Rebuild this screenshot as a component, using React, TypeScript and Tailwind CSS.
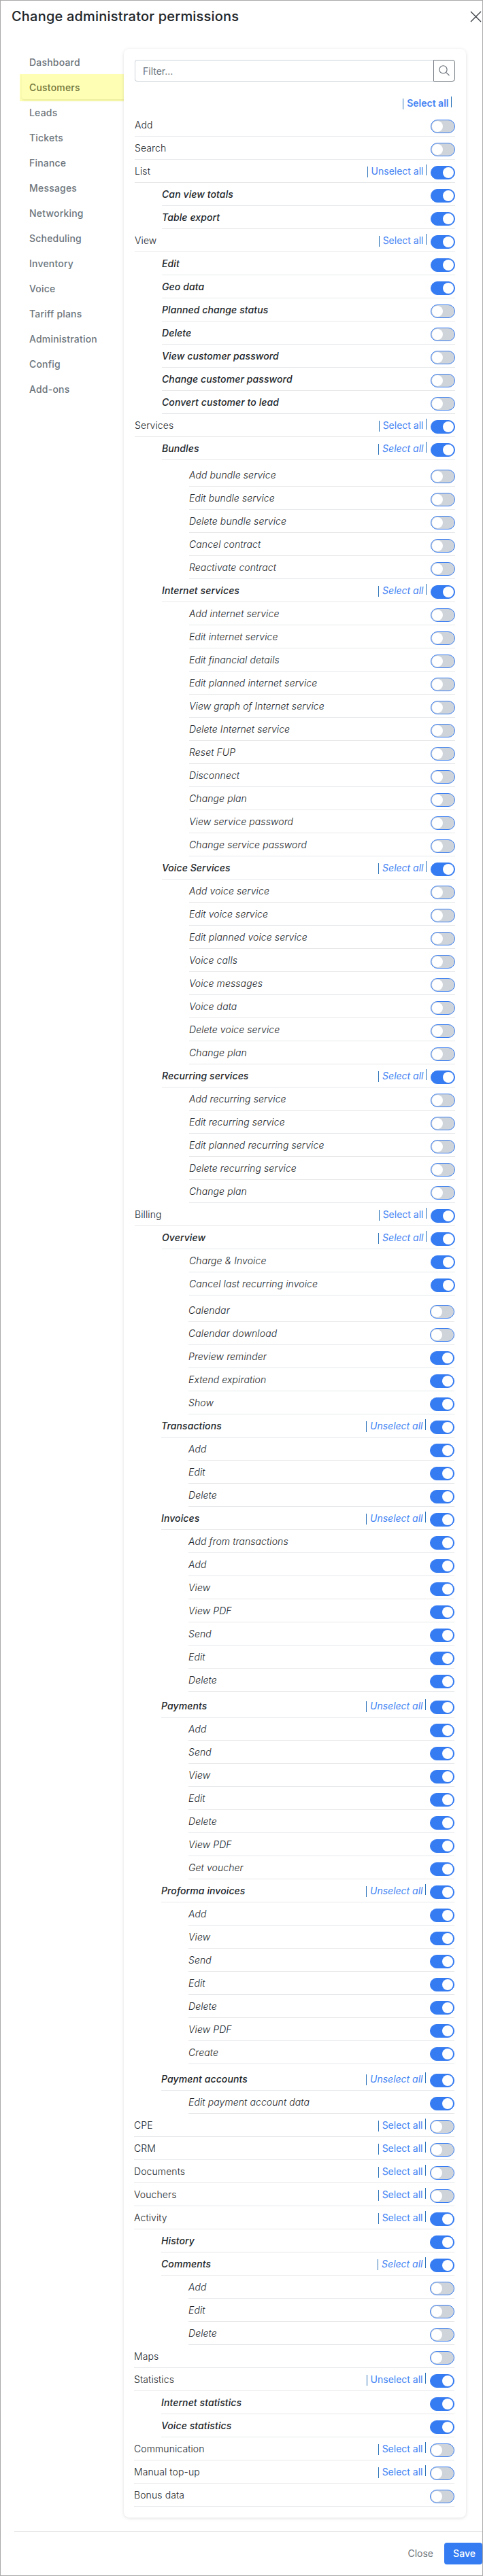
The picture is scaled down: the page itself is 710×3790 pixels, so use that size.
type Row = { t: string; d: 0 | 1 | 2; on?: boolean; a?: 's' | 'u'; gap?: string };

const r = (t: string, d: 0 | 1 | 2, on = false, a?: 's' | 'u', gap?: string): Row => ({ t, d, on, a, gap });

const upper: Row[] = [
  r('Add', 0), r('Search', 0), r('List', 0, true, 'u'), r('Can view totals', 1, true), r('Table export', 1, true),
  r('View', 0, true, 's'), r('Edit', 1, true), r('Geo data', 1, true), r('Planned change status', 1), r('Delete', 1),
  r('View customer password', 1), r('Change customer password', 1), r('Convert customer to lead', 1),
  r('Services', 0, true, 's'), r('Bundles', 1, true, 's'),
  r('Add bundle service', 2, false, undefined, 'mt-[5px]'), r('Edit bundle service', 2), r('Delete bundle service', 2), r('Cancel contract', 2), r('Reactivate contract', 2),
  r('Internet services', 1, true, 's'), r('Add internet service', 2), r('Edit internet service', 2), r('Edit financial details', 2),
  r('Edit planned internet service', 2), r('View graph of Internet service', 2), r('Delete Internet service', 2), r('Reset FUP', 2),
  r('Disconnect', 2), r('Change plan', 2), r('View service password', 2), r('Change service password', 2),
  r('Voice Services', 1, true, 's'), r('Add voice service', 2), r('Edit voice service', 2), r('Edit planned voice service', 2),
  r('Voice calls', 2), r('Voice messages', 2), r('Voice data', 2), r('Delete voice service', 2), r('Change plan', 2),
  r('Recurring services', 1, true, 's'), r('Add recurring service', 2), r('Edit recurring service', 2),
  r('Edit planned recurring service', 2), r('Delete recurring service', 2), r('Change plan', 2),
  r('Billing', 0, true, 's'), r('Overview', 1, true, 's'), r('Charge & Invoice', 2, true), r('Cancel last recurring invoice', 2, true),
];

const lower: Row[] = [
  r('Calendar', 2, false, undefined, 'mt-[5px]'), r('Calendar download', 2), r('Preview reminder', 2, true), r('Extend expiration', 2, true), r('Show', 2, true),
  r('Transactions', 1, true, 'u'), r('Add', 2, true), r('Edit', 2, true), r('Delete', 2, true),
  r('Invoices', 1, true, 'u'), r('Add from transactions', 2, true), r('Add', 2, true), r('View', 2, true), r('View PDF', 2, true), r('Send', 2, true), r('Edit', 2, true), r('Delete', 2, true),
  r('Payments', 1, true, 'u', 'mt-1'), r('Add', 2, true), r('Send', 2, true), r('View', 2, true), r('Edit', 2, true), r('Delete', 2, true), r('View PDF', 2, true), r('Get voucher', 2, true),
  r('Proforma invoices', 1, true, 'u'), r('Add', 2, true), r('View', 2, true), r('Send', 2, true), r('Edit', 2, true), r('Delete', 2, true), r('View PDF', 2, true), r('Create', 2, true),
  r('Payment accounts', 1, true, 'u', 'mt-[5px]'), r('Edit payment account data', 2, true),
  r('CPE', 0, false, 's'), r('CRM', 0, false, 's'), r('Documents', 0, false, 's'), r('Vouchers', 0, false, 's'), r('Activity', 0, true, 's'),
  r('History', 1, true), r('Comments', 1, true, 's'), r('Add', 2), r('Edit', 2), r('Delete', 2), r('Maps', 0),
  r('Statistics', 0, true, 'u'), r('Internet statistics', 1, true), r('Voice statistics', 1, true),
  r('Communication', 0, false, 's'), r('Manual top-up', 0, false, 's'), r('Bonus data', 0),
];

const nav = ['Dashboard', 'Customers', 'Leads', 'Tickets', 'Finance', 'Messages', 'Networking', 'Scheduling', 'Inventory', 'Voice', 'Tariff plans', 'Administration', 'Config', 'Add-ons'];

const indent = ['', 'ml-10 italic', 'ml-20 italic'];
const label = ['font-light', 'font-medium', 'font-light'];

function Toggle({ on }: { on?: boolean }) {
  return (
    <span className={`flex h-5 w-9 shrink-0 items-center rounded-full border border-[#357bf2] ${on ? 'justify-end bg-[#357bf2]' : 'bg-[#ced4da]'}`}>
      <span className="mx-[0.6px] size-[16.6px] rounded-full bg-white" />
    </span>
  );
}

function BulkLink({ text }: { text: string }) {
  return (
    <span className="flex h-5 items-start text-[#4383f3]">
      <span className="mt-[3px] h-4 w-px bg-[#2a72b8]" />
      <span className="ml-[5px] leading-5">{text}</span>
      <span className="ml-[3.5px] h-4 w-px bg-[#2a72b8]" />
    </span>
  );
}

function PermissionRow({ row }: { row: Row }) {
  return (
    <div className={`flex h-[34px] items-start border-b border-[#e6e8ea] ${indent[row.d]} ${row.gap ?? ''}`}>
      <span className={`mt-[7px] flex-1 leading-5 tracking-[0.1px] text-[#212529] ${label[row.d]}`}>{row.t}</span>
      {row.a && (
        <span className="mt-[7px] mr-1.5">
          <BulkLink text={row.a === 's' ? 'Select all' : 'Unselect all'} />
        </span>
      )}
      <span className="mt-[9px]"><Toggle on={row.on} /></span>
    </div>
  );
}

export default function App() {
  return (
    <div className="flex h-[3790px] w-[710px] flex-col border border-[#a9a9a9] bg-white font-['Inter',sans-serif] text-sm text-[#212529]">
      <header className="flex h-[71px] shrink-0 items-start justify-between pl-4">
        <h1 className="mt-2 text-xl font-medium leading-[30px] tracking-[0.2px]">Change administrator permissions</h1>
        <svg className="mt-[15px] mr-px" width="17" height="17" viewBox="0 0 17 17" fill="none" stroke="#33383d" strokeWidth="1.3">
          <path d="M1 1 16 16M16 1 1 16" />
        </svg>
      </header>
      <div className="flex h-[3632px] shrink-0">
        <nav className="w-[181px] pl-7 font-medium leading-[39px] tracking-[0.2px] text-[#6c757d]">
          {nav.map((n) =>
            n === 'Customers' ? (
              <div key={n} className="-mb-[3px] h-10 bg-[#feffb5] pl-[3px]">
                <div className="h-[37px] rounded-bl pl-[11px] text-[#73763c] shadow-[0_2px_3px_rgba(120,120,0,0.14)]">{n}</div>
              </div>
            ) : (
              <div key={n} className="h-[37px] pl-3.5">{n}</div>
            ),
          )}
        </nav>
        <main className="relative w-[503px] rounded-lg bg-white px-4 pt-4 shadow-[0_1px_5px_rgba(0,0,0,0.13)]">
          <div className="flex h-8 w-[471px]">
            <div className="flex-1 rounded-l border border-r-0 border-[#ced4da] pl-[11px] leading-[32px] text-[#6c757d]">Filter...</div>
            <div className="flex w-8 items-center justify-center rounded-r border border-[#6c757d]">
              <svg width="16" height="16" viewBox="0 0 16 16" fill="none" stroke="#5d666e" strokeWidth="1.1">
                <circle cx="6.5" cy="6.4" r="5.6" />
                <path d="m10.5 10.4 5 4.6" />
              </svg>
            </div>
          </div>
          <div className="flex h-[47px] w-[466px] justify-end pt-[22px] font-semibold">
            <BulkLink text="Select all" />
          </div>
          <div className="w-[471px]">{upper.map((row, i) => <PermissionRow key={i} row={row} />)}</div>
          <div className="-ml-px w-[471px]">{lower.map((row, i) => <PermissionRow key={i} row={row} />)}</div>
        </main>
      </div>
      <footer className="mt-5 ml-5 flex flex-1 items-start justify-end border-t border-[#e6e8ea] pt-4">
        <span className="mr-4 leading-8 text-[#6c757d]">Close</span>
        <button className="h-8 w-14 rounded bg-[#357bf2] pl-[3px] font-medium text-white">Save</button>
      </footer>
    </div>
  );
}
